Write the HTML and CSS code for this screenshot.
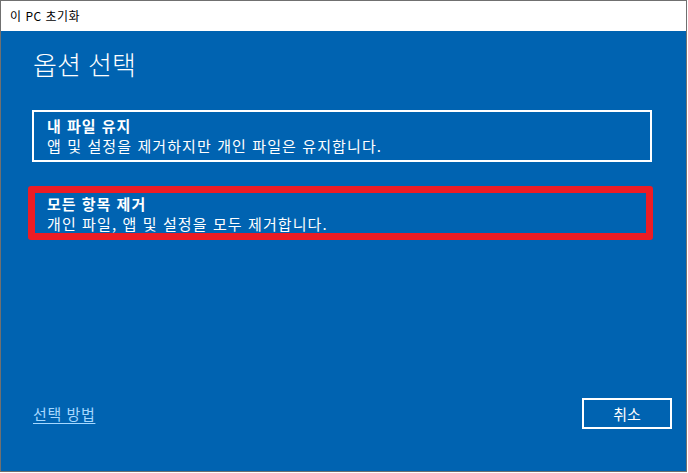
FILE: index.html
```html
<!DOCTYPE html>
<html lang="ko">
<head>
<meta charset="utf-8">
<title>이 PC 초기화</title>
<link rel="stylesheet" href="styles.css">
</head>
<body>
<div class="window">
  <div class="titlebar">이 PC 초기화</div>
  <div class="content">
    <h1 class="heading">옵션 선택</h1>
    <div class="options">
      <div class="option">
        <div class="option-title">내 파일 유지</div>
        <div class="option-desc">앱 및 설정을 제거하지만 개인 파일은 유지합니다.</div>
      </div>
      <div class="option option-marked">
        <div class="option-title">모든 항목 제거</div>
        <div class="option-desc">개인 파일, 앱 및 설정을 모두 제거합니다.</div>
      </div>
    </div>
    <div class="footer">
      <a class="help-link" href="#">선택 방법</a>
      <button class="cancel" type="button">취소</button>
    </div>
  </div>
</div>
</body>
</html>
```
FILE: styles.css
```css
html, body {
  margin: 0;
  padding: 0;
  background: #ffffff;
}
body {
  font-family: "Noto Sans CJK KR", "Noto Sans", sans-serif;
}
.window {
  width: 687px;
  height: 472px;
  box-sizing: border-box;
  border: 1px solid #707070;
  display: flex;
  flex-direction: column;
}
.titlebar {
  height: 30px;
  flex: none;
  background: #ffffff;
  color: #000000;
  font-size: 12px;
  line-height: 30px;
  padding-left: 9px;
  letter-spacing: 0.5px;
}
.content {
  flex: 1;
  background: #0063b1;
  color: #ffffff;
  display: flex;
  flex-direction: column;
  padding: 0 34px 0 31px;
}
.heading {
  margin: 15px 0 0 1px;
  font-size: 26px;
  font-weight: 300;
  line-height: 36px;
}
.options {
  display: flex;
  flex-direction: column;
  gap: 26px;
  margin-top: 28px;
}
.option {
  border: 2px solid #ffffff;
  padding: 4px 0 6px 13px;
  height: 52px;
  box-sizing: border-box;
  position: relative;
}
.option-title {
  font-size: 15px;
  font-weight: 700;
  line-height: 20px;
  letter-spacing: 1px;
}
.option-desc {
  font-size: 15px;
  line-height: 20px;
  letter-spacing: 1.1px;
}
.option-marked {
  border-color: #0063b1;
}
.option-marked::after {
  content: "";
  position: absolute;
  left: -6px;
  right: -3px;
  top: -4px;
  bottom: -2px;
  border: 7px solid #ed1c24;
  border-radius: 3px;
}
.footer {
  margin-top: auto;
  margin-bottom: 42px;
  display: flex;
  justify-content: space-between;
  align-items: center;
  padding-left: 1px;
  padding-right: 0;
}
.help-link {
  color: #a6d8ff;
  font-size: 15px;
  text-decoration: underline;
  text-underline-offset: 3px;
  letter-spacing: 0.6px;
}
.cancel {
  width: 90px;
  height: 31px;
  background: transparent;
  border: 2px solid #ffffff;
  color: #ffffff;
  font-family: inherit;
  font-size: 15px;
  margin-right: -20px;
}
```
